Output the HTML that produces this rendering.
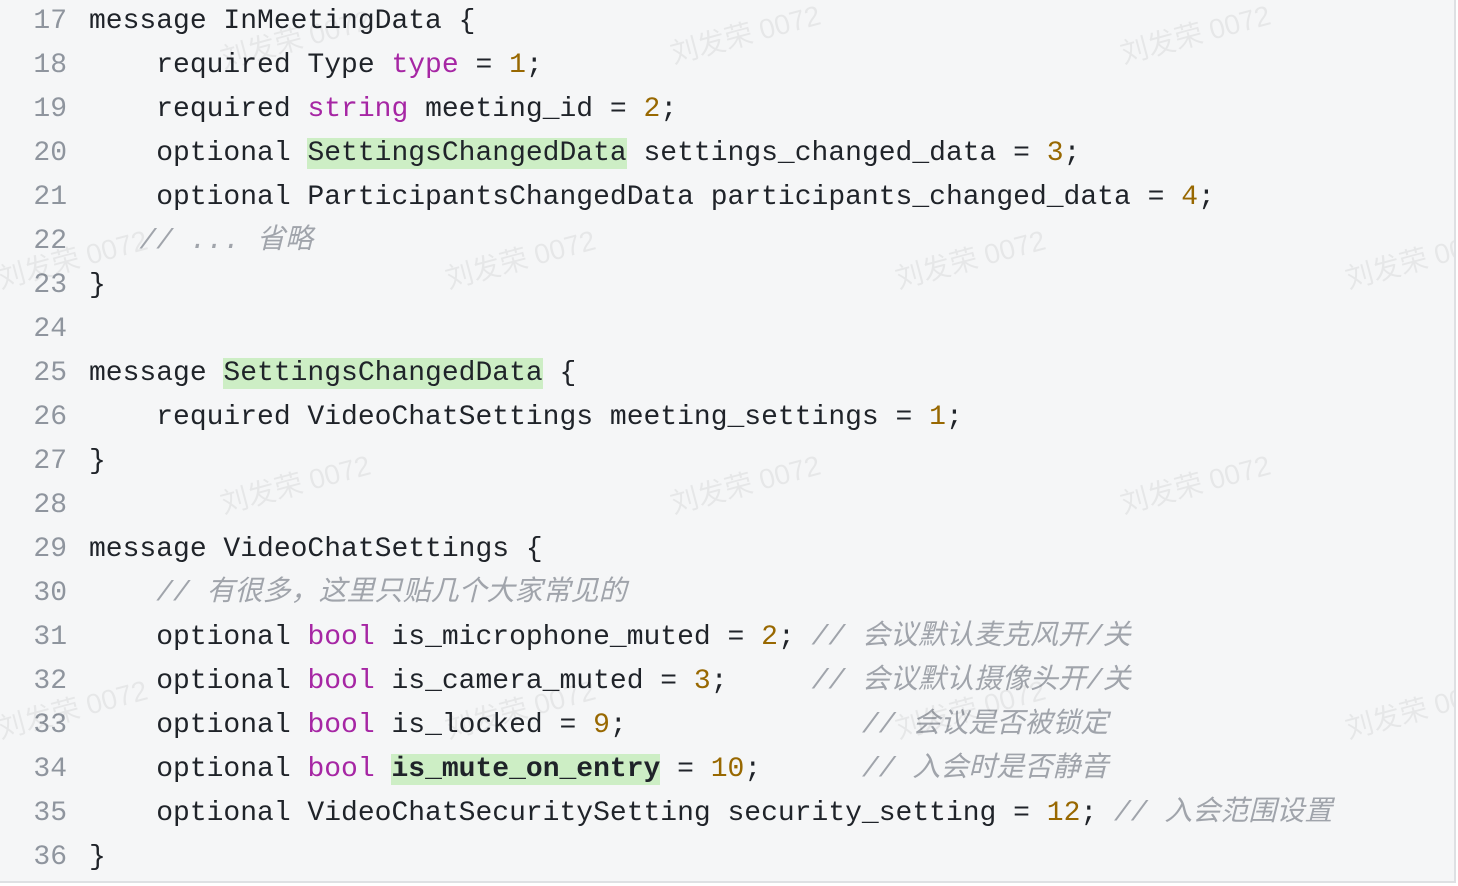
<!DOCTYPE html>
<html><head><meta charset="utf-8"><style>
html,body{margin:0;padding:0;}
body{width:1458px;height:886px;background:#fff;overflow:hidden;position:relative;}
.box{position:absolute;left:0;top:0;width:1454px;height:881px;background:#f5f6f7;border-right:2px solid #dee0e3;border-bottom:2px solid #dee0e3;overflow:hidden;}
.code{position:absolute;left:0;top:0px;font-family:"Liberation Mono","Noto Sans CJK SC",monospace;font-size:28px;line-height:44px;color:#1f2329;white-space:pre;}
.ln{display:inline-block;width:67px;text-align:right;color:#8f959e;margin-right:22px;}
.k{color:#a626a4}.n{color:#986801}.c{color:#a0a4ab;font-style:italic;font-family:"Liberation Mono","Noto Sans CJK SC",monospace;}
.h{background:#cdeec5}.b{font-weight:bold}
.wm{position:absolute;font-family:"Liberation Sans","Noto Sans CJK SC",sans-serif;font-size:28px;color:rgba(0,0,0,0.06);transform:rotate(-15deg);white-space:nowrap;}
</style></head><body><div class="box">
<div class="code"><div><span class="ln">17</span>message InMeetingData {</div><div><span class="ln">18</span>    required Type <span class="k">type</span> = <span class="n">1</span>;</div><div><span class="ln">19</span>    required <span class="k">string</span> meeting_id = <span class="n">2</span>;</div><div><span class="ln">20</span>    optional <span class="h">SettingsChangedData</span> settings_changed_data = <span class="n">3</span>;</div><div><span class="ln">21</span>    optional ParticipantsChangedData participants_changed_data = <span class="n">4</span>;</div><div><span class="ln">22</span>   <span class="c">// ... 省略</span></div><div><span class="ln">23</span>}</div><div><span class="ln">24</span></div><div><span class="ln">25</span>message <span class="h">SettingsChangedData</span> {</div><div><span class="ln">26</span>    required VideoChatSettings meeting_settings = <span class="n">1</span>;</div><div><span class="ln">27</span>}</div><div><span class="ln">28</span></div><div><span class="ln">29</span>message VideoChatSettings {</div><div><span class="ln">30</span>    <span class="c">// 有很多，这里只贴几个大家常见的</span></div><div><span class="ln">31</span>    optional <span class="k">bool</span> is_microphone_muted = <span class="n">2</span>; <span class="c">// 会议默认麦克风开/关</span></div><div><span class="ln">32</span>    optional <span class="k">bool</span> is_camera_muted = <span class="n">3</span>;     <span class="c">// 会议默认摄像头开/关</span></div><div><span class="ln">33</span>    optional <span class="k">bool</span> is_locked = <span class="n">9</span>;              <span class="c">// 会议是否被锁定</span></div><div><span class="ln">34</span>    optional <span class="k">bool</span> <span class="h b">is_mute_on_entry</span> = <span class="n">10</span>;      <span class="c">// 入会时是否静音</span></div><div><span class="ln">35</span>    optional VideoChatSecuritySetting security_setting = <span class="n">12</span>; <span class="c">// 入会范围设置</span></div><div><span class="ln">36</span>}</div></div>
<div class="wm" style="left:218px;top:18px">刘发荣 0072</div>
<div class="wm" style="left:668px;top:13px">刘发荣 0072</div>
<div class="wm" style="left:1118px;top:13px">刘发荣 0072</div>
<div class="wm" style="left:-5px;top:238px">刘发荣 0072</div>
<div class="wm" style="left:443px;top:238px">刘发荣 0072</div>
<div class="wm" style="left:893px;top:238px">刘发荣 0072</div>
<div class="wm" style="left:1343px;top:238px">刘发荣 0072</div>
<div class="wm" style="left:218px;top:463px">刘发荣 0072</div>
<div class="wm" style="left:668px;top:463px">刘发荣 0072</div>
<div class="wm" style="left:1118px;top:463px">刘发荣 0072</div>
<div class="wm" style="left:-5px;top:688px">刘发荣 0072</div>
<div class="wm" style="left:443px;top:688px">刘发荣 0072</div>
<div class="wm" style="left:893px;top:688px">刘发荣 0072</div>
<div class="wm" style="left:1343px;top:688px">刘发荣 0072</div>
</div></body></html>
